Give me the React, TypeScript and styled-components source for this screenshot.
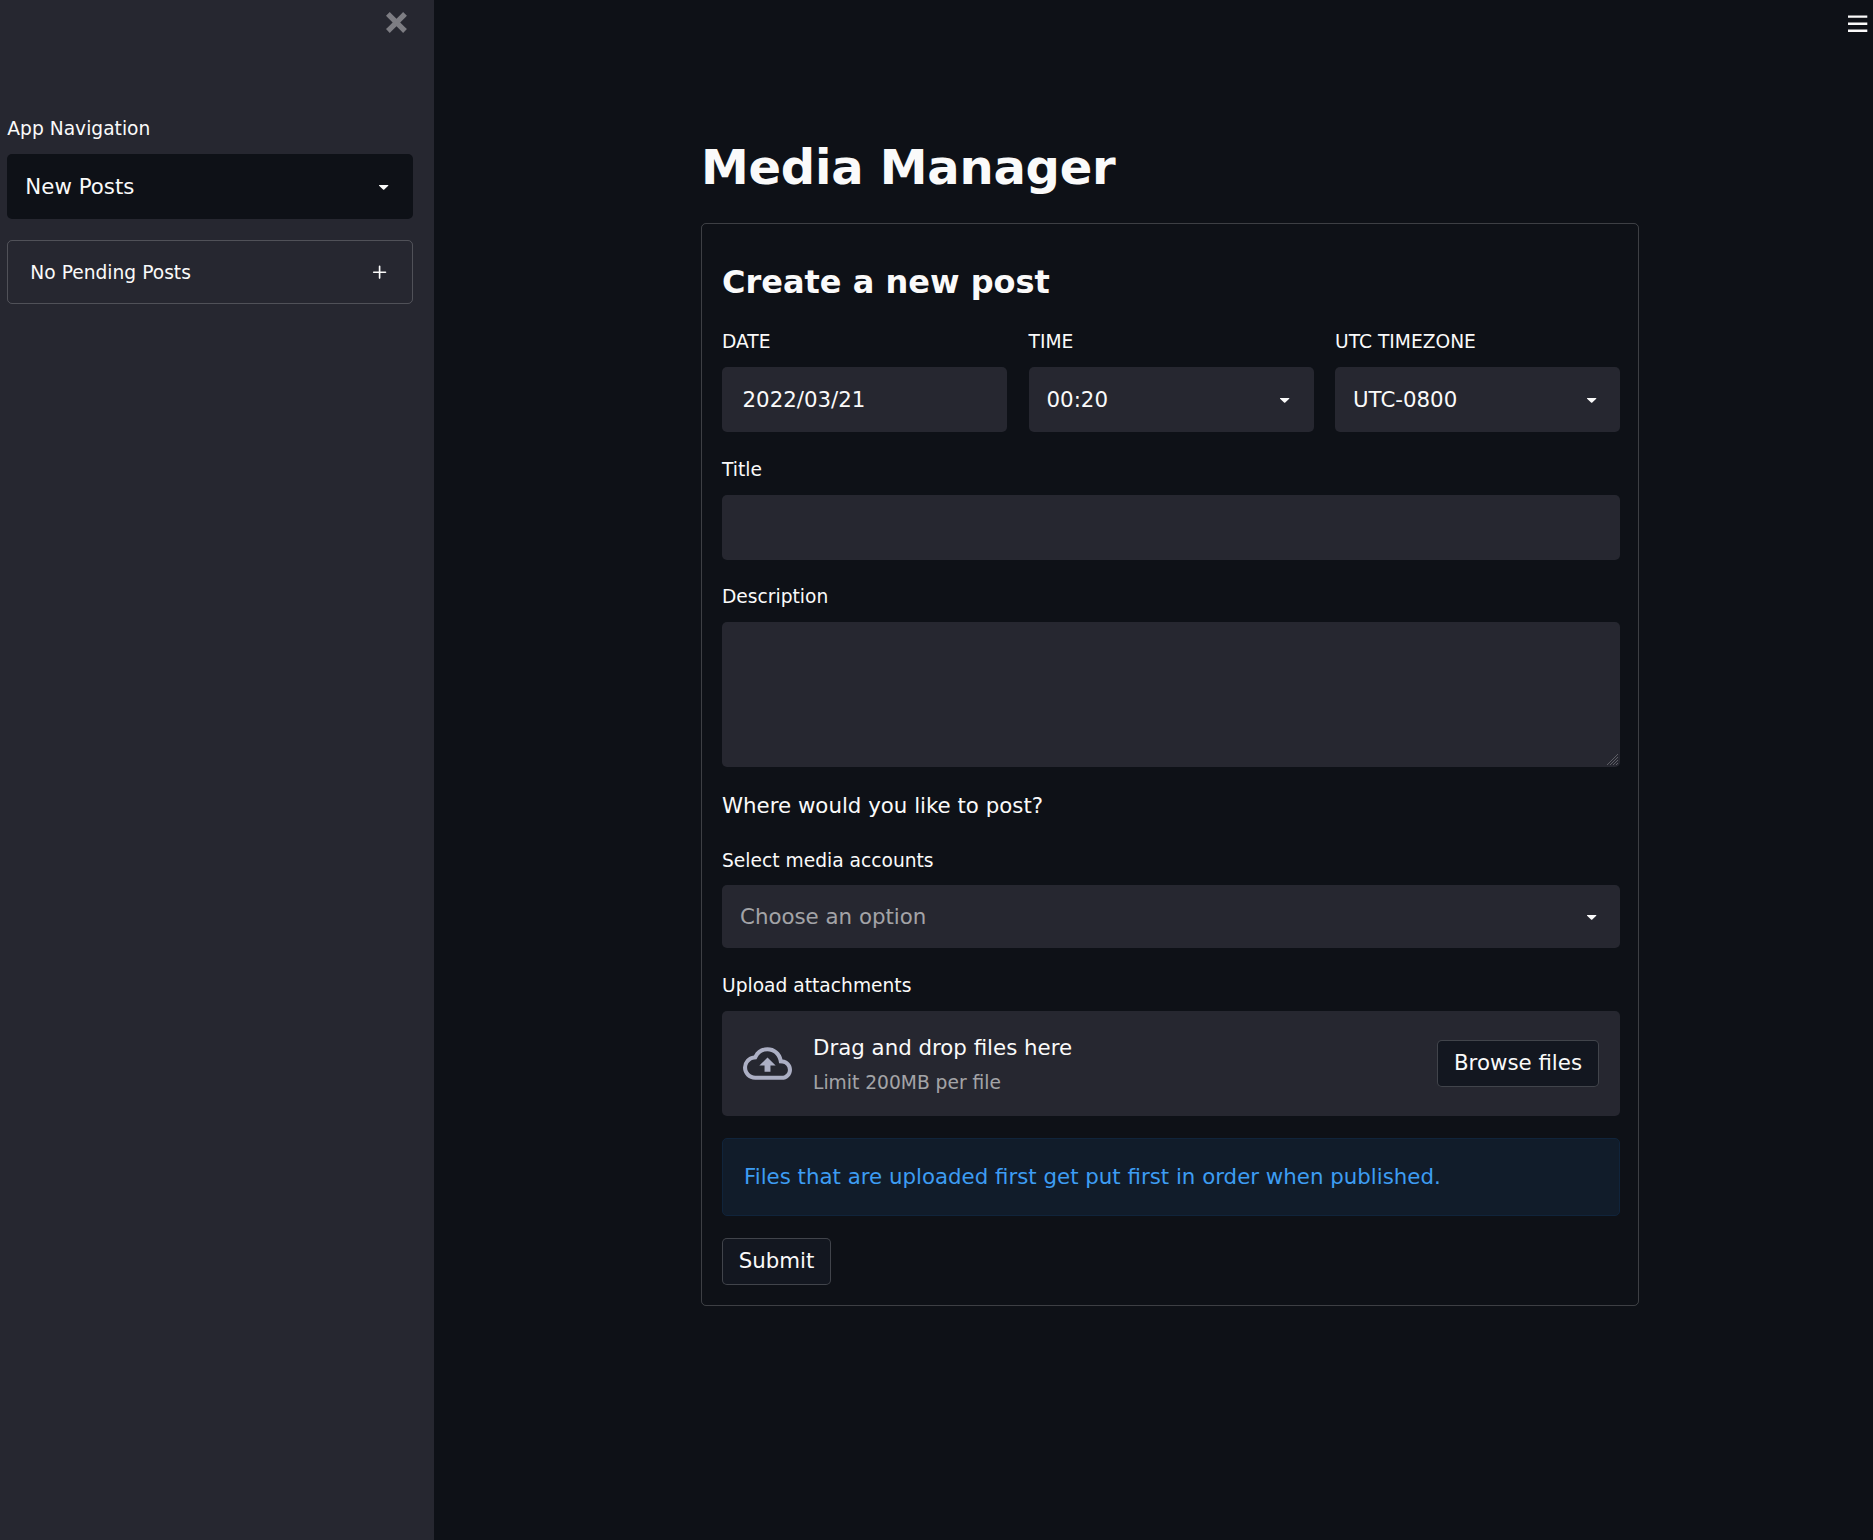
import React from "react";
import styled, { createGlobalStyle } from "styled-components";

const GlobalStyle = createGlobalStyle`
  *, *::before, *::after { box-sizing: border-box; }
  body { margin: 0; background: #0e1117; }
`;

const font = `"DejaVu Sans", sans-serif`;

const Page = styled.div`
  display: flex;
  height: 1540px;
  overflow: hidden;
  background: #0e1117;
  color: #fafafa;
  font: 21.333px/34px ${font};
`;

const Sidebar = styled.aside`
  display: flex;
  flex-direction: column;
  flex: none;
  width: 434px;
  padding: 12px 21px 0 7.33px;
  background: #262730;
`;

const SidebarTop = styled.div`
  display: flex;
  justify-content: flex-end;
  height: 102px;
  padding-right: 6px;
`;

const IconButton = styled.button`
  display: block;
  height: 22px;
  padding: 0;
  border: 0;
  background: none;
  color: inherit;
  line-height: 0;
`;

const Main = styled.main`
  display: flex;
  flex-direction: column;
  flex: 1;
`;

const Toolbar = styled.header`
  display: flex;
  justify-content: flex-end;
  height: 134px;
  padding: 12px 5px 0 0;
`;

const Content = styled.div`
  width: 938px;
  margin-left: 267px;
`;

const PageTitle = styled.h1`
  height: 89px;
  margin: 0;
  font: bold 48px/67px ${font};
  letter-spacing: -0.005em;
`;

const Form = styled.form`
  display: flex;
  flex-direction: column;
  gap: 22px;
  height: 1083px;
  padding: 34px 18px 0 20px;
  border: 1px solid rgba(250, 250, 250, 0.2);
  border-radius: 5px;
`;

const FormTitle = styled.h2`
  height: 47px;
  margin: 0;
  font: bold 32px/48px ${font};
`;

const Columns = styled.div`
  display: grid;
  grid-template-columns: repeat(3, 285px);
  justify-content: space-between;
`;

const Label = styled.label<{ $flush?: boolean; $gap?: number }>`
  display: block;
  margin-bottom: ${({ $gap = 10 }) => $gap}px;
  padding-top: ${({ $flush }) => ($flush ? 0 : 0.6)}px;
  font-size: 18.667px;
  line-height: 30px;
`;

const Control = styled.div<{ $dark?: boolean; $height?: number }>`
  display: flex;
  align-items: center;
  justify-content: space-between;
  height: ${({ $height = 65 }) => $height}px;
  padding: 0 ${({ $dark }) => ($dark ? 19 : 18)}px 0 18px;
  border-radius: 5px;
  background: ${({ $dark }) => ($dark ? "#0e1117" : "#262730")};
`;

const Placeholder = styled.span`
  color: rgba(250, 250, 250, 0.6);
`;

const TextInput = styled.input`
  display: block;
  width: 100%;
  height: 65px;
  padding: 0 20.5px;
  border: 0;
  border-radius: 5px;
  background: #262730;
  color: inherit;
  font: inherit;
`;

const TextAreaFrame = styled.div`
  position: relative;
  height: 145px;
`;

const TextArea = styled.textarea`
  display: block;
  width: 100%;
  height: 145px;
  padding: 20px;
  border: 0;
  border-radius: 5px;
  background: #262730;
  color: inherit;
  font: inherit;
  resize: none;
`;

const GripIcon = styled.svg`
  position: absolute;
  right: 2px;
  bottom: 2px;
  pointer-events: none;
`;

const Expander = styled.div`
  display: flex;
  align-items: center;
  justify-content: space-between;
  height: 64px;
  margin-top: 21px;
  padding: 1px 22px 0;
  border: 1px solid rgba(250, 250, 250, 0.2);
  border-radius: 5px;
  font-size: 18.667px;
`;

const Question = styled.p`
  margin: 0 0 1px;
  line-height: 33px;
`;

const Dropzone = styled.section`
  display: flex;
  align-items: center;
  height: 105px;
  padding: 0 21px;
  border-radius: 5px;
  background: #262730;
`;

const DropText = styled.div`
  display: flex;
  flex-direction: column;
  gap: 1px;
  flex: 1;
  margin-left: 21px;
  padding-top: 5px;
`;

const Hint = styled.small`
  color: rgba(250, 250, 250, 0.6);
  font-size: 18.667px;
`;

const Button = styled.button<{ $width: number }>`
  width: ${({ $width }) => $width}px;
  height: 47px;
  padding: 0 0 1px;
  border: 1px solid rgba(250, 250, 250, 0.2);
  border-radius: 5px;
  background: #131720;
  color: inherit;
  font: inherit;
`;

const Notice = styled.div`
  height: 78px;
  padding: 21px 21px 0;
  border: 1px solid #10243b;
  border-radius: 5px;
  background: #111c2a;
  color: #3d9df3;
`;

const CloseIcon = () => (
  <svg width="21.333" height="21.333" viewBox="0 0 8 8" fill="#7d7d83">
    <path d="M1.41 0l-1.41 1.41.72.72 1.78 1.81-1.78 1.78-.72.69 1.41 1.44.72-.72 1.81-1.81 1.78 1.81.69.72 1.44-1.44-.72-.69-1.81-1.78 1.81-1.81.72-.72-1.44-1.41-.69.72-1.78 1.78-1.81-1.78-.72-.72z" />
  </svg>
);

const MenuIcon = () => (
  <svg width="20" height="22" viewBox="0 0 20 22" fill="#fafafa">
    <path d="M0 3.5h19.3v2.3H0zM0 10.6h19.3v2.4H0zM0 17.6h19.3v2.4H0z" />
  </svg>
);

const Caret = () => (
  <svg width="21.333" height="21.333" viewBox="0 0 24 24" fill="#fafafa">
    <path d="M12.7071 15.2929L17.1464 10.8536C17.4614 10.5386 17.2383 10 16.7929 10L7.20711 10C6.76165 10 6.53857 10.5386 6.85355 10.8536L11.2929 15.2929C11.6834 15.6834 12.3166 15.6834 12.7071 15.2929Z" />
  </svg>
);

const PlusIcon = () => (
  <svg width="21" height="21" viewBox="0 0 21 21" stroke="#fafafa" strokeWidth="1.65" strokeLinecap="round">
    <path d="M4.7 10.2h11.8M10.6 4.3v11.8" />
  </svg>
);

const CloudUploadIcon = () => (
  <svg width="49" height="49" viewBox="0 0 24 24" fill="#acafc4">
    <path d="M19.35 10.04A7.49 7.49 0 0012 4C9.11 4 6.6 5.64 5.35 8.04A5.994 5.994 0 000 14c0 3.31 2.69 6 6 6h13c2.76 0 5-2.24 5-5 0-2.64-2.05-4.78-4.65-4.96zM19 18H6c-2.21 0-4-1.79-4-4 0-2.05 1.53-3.76 3.56-3.97l1.07-.11.5-.95A5.469 5.469 0 0112 6c2.62 0 4.88 1.86 5.39 4.43l.3 1.5 1.53.11A2.98 2.98 0 0122 15c0 1.65-1.35 3-3 3zM8 13h2.55v3h2.9v-3H16l-4-4z" />
  </svg>
);

export default function App() {
  return (
    <Page>
      <GlobalStyle />
      <Sidebar>
        <SidebarTop>
          <IconButton aria-label="Close sidebar"><CloseIcon /></IconButton>
        </SidebarTop>
        <Label $flush>App Navigation</Label>
        <Control $dark>
          <span>New Posts</span>
          <Caret />
        </Control>
        <Expander>
          <span>No Pending Posts</span>
          <PlusIcon />
        </Expander>
      </Sidebar>
      <Main>
        <Toolbar>
          <IconButton aria-label="Menu"><MenuIcon /></IconButton>
        </Toolbar>
        <Content>
          <PageTitle>Media Manager</PageTitle>
          <Form onSubmit={(event) => event.preventDefault()}>
            <FormTitle>Create a new post</FormTitle>
            <Columns>
              <div>
                <Label $flush>DATE</Label>
                <TextInput defaultValue="2022/03/21" />
              </div>
              <div>
                <Label $flush>TIME</Label>
                <Control>
                  <span>00:20</span>
                  <Caret />
                </Control>
              </div>
              <div>
                <Label $flush>UTC TIMEZONE</Label>
                <Control>
                  <span>UTC-0800</span>
                  <Caret />
                </Control>
              </div>
            </Columns>
            <div>
              <Label>Title</Label>
              <TextInput />
            </div>
            <div>
              <Label>Description</Label>
              <TextAreaFrame>
                <TextArea />
                <GripIcon width="11" height="11" viewBox="0 0 11 11" stroke="#62636a" strokeWidth="0.9">
                  <path d="M0 11L11 0M3 11L11 3M6 11L11 6M9 11L11 9" />
                </GripIcon>
              </TextAreaFrame>
            </div>
            <Question>Where would you like to post?</Question>
            <div>
              <Label $gap={9.4}>Select media accounts</Label>
              <Control $height={63}>
                <Placeholder>Choose an option</Placeholder>
                <Caret />
              </Control>
            </div>
            <div>
              <Label>Upload attachments</Label>
              <Dropzone>
                <CloudUploadIcon />
                <DropText>
                  <span>Drag and drop files here</span>
                  <Hint>Limit 200MB per file</Hint>
                </DropText>
                <Button type="button" $width={162}>Browse files</Button>
              </Dropzone>
            </div>
            <Notice>Files that are uploaded first get put first in order when published.</Notice>
            <Button type="submit" $width={109}>Submit</Button>
          </Form>
        </Content>
      </Main>
    </Page>
  );
}
